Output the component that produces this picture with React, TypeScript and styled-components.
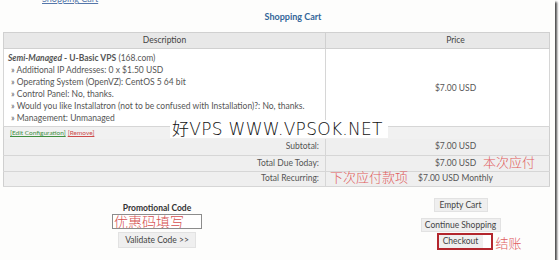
import styled, { createGlobalStyle } from 'styled-components';

const GlobalStyle = createGlobalStyle`
  html, body {
    margin: 0;
    padding: 0;
    background: #fff;
  }
  body {
    font-family: Lato, "Liberation Sans", sans-serif;
    font-size: 8.5px;
    color: #555;
  }
`;

const cjk = `"Noto Sans CJK SC", "Liberation Sans", sans-serif`;

const Frame = styled.div`
  position: relative;
  width: 555px;
  height: 260px;
  background: #fdfdfc;
  box-shadow: 2px 2px 2px rgba(0, 0, 0, 0.7);
  overflow: hidden;
`;

const Crumb = styled.a`
  display: block;
  width: fit-content;
  margin: -7px 0 0 42px;
  font-size: 9px;
  line-height: 11px;
  color: #5577aa;
  text-decoration: underline;
`;

const Title = styled.h1`
  margin: 7px 0 9px;
  padding-left: 31px;
  text-align: center;
  font-size: 9px;
  line-height: 12px;
  font-weight: bold;
  color: #336699;
`;

const Cart = styled.table`
  margin-left: 3px;
  width: 547px;
  border-collapse: collapse;
  table-layout: fixed;
  background: #fff;
  border: 1px solid #cfcfcf;
`;

const Head = styled.th<{ $price?: boolean }>`
  ${p => (p.$price ? '' : 'width: 321px;')}
  height: 15px;
  padding: 0 0 0 ${p => (p.$price ? 36 : 0)}px;
  line-height: 15px;
  background: #e8e8e8;
  border: 1px solid #d0d0d0;
  font-weight: normal;
  color: #444;
`;

const ItemCell = styled.td`
  padding: 3px 4px 2px;
  line-height: 12px;
  vertical-align: top;
  border: 1px solid #d6d6d6;
  white-space: nowrap;
`;

const PriceCell = styled.td`
  padding: 0 0 0 36px;
  text-align: center;
  vertical-align: middle;
  border: 1px solid #d6d6d6;
`;

const Option = styled.div`
  padding-left: 3px;
`;

const LinkRow = styled.tr`
  background: #f1f1f1;
`;

const LinkCell = styled.td`
  height: 12px;
  padding: 0 6px;
  line-height: 12px;
  border-top: 1px solid #d6d6d6;
  font-size: 6.5px;
`;

const SmallLink = styled.a<{ $red?: boolean }>`
  color: ${p => (p.$red ? '#cc4b4b' : '#3f8f3f')};
  text-decoration: underline;
  margin-right: 2px;
`;

const SumRow = styled.tr<{ $h: number }>`
  background: #efefef;
  height: ${p => p.$h}px;
`;

const SumLabel = styled.td`
  padding: 0 6px 0 0;
  text-align: right;
  line-height: 11px;
  border-bottom: 1px solid #d6d6d6;
  border-right: 1px solid #d6d6d6;
`;

const SumValue = styled.td`
  padding: 0 0 0 36px;
  text-align: center;
  line-height: 11px;
  border-bottom: 1px solid #d6d6d6;
`;

const Amount = styled.span`
  position: relative;
`;

const Note = styled.span<{ $side: 'left' | 'right' }>`
  position: absolute;
  top: -4px;
  ${p => (p.$side === 'right' ? 'left: 100%; margin-left: 7px;' : 'right: 100%; margin-right: 10px;')}
  font-family: ${cjk};
  font-size: 13px;
  font-weight: 300;
  line-height: 16px;
  color: #e05c5c;
  white-space: nowrap;
`;

const Footer = styled.div`
  display: grid;
  grid-template-columns: 314px 1fr;
`;

const Promo = styled.div`
  display: flex;
  flex-direction: column;
  align-items: center;
  padding-top: 16px;
`;

const PromoLabel = styled.div`
  font-weight: bold;
  color: #333;
  line-height: 11px;
`;

const PromoInput = styled.input`
  box-sizing: border-box;
  width: 90px;
  height: 15px;
  margin: 0;
  padding: 0 1px;
  border: 1px solid #8c8c8c;
  background: #fff;
  font-family: ${cjk};
  font-size: 14px;
  font-weight: 300;
  line-height: 13px;
  color: #d65050;
  outline: none;
`;

const Actions = styled.div`
  display: flex;
  flex-direction: column;
  align-items: center;
  padding: 11px 0 0 52px;
`;

const Button = styled.button<{ $w: number; $h?: number; $top?: number; $flat?: boolean }>`
  box-sizing: border-box;
  width: ${p => p.$w}px;
  height: ${p => p.$h ?? 14}px;
  margin: ${p => p.$top ?? 0}px 0 0;
  padding: 0;
  border: ${p => (p.$flat ? 'none' : '1px solid #e2e2e2')};
  background: #efefef;
  font-family: inherit;
  font-size: 8.5px;
  line-height: 12px;
  color: #444;
`;

const Marked = styled.div`
  position: relative;
  display: flex;
  margin: 1px 0 0 8px;
  padding: 0 8px 0 0;
  border: 2px solid #b3262d;
  background: #fff;
`;

const MarkNote = styled.span`
  position: absolute;
  left: 100%;
  top: 0;
  margin-left: 5px;
  font-family: ${cjk};
  font-size: 13px;
  font-weight: 300;
  line-height: 16px;
  color: #e05c5c;
  white-space: nowrap;
`;

const Watermark = styled.div`
  position: absolute;
  left: 170px;
  top: 120px;
  width: 218px;
  height: 18px;
  box-sizing: border-box;
  padding-left: 2px;
  background: #fff;
  font-family: "DejaVu Sans", ${cjk};
  font-size: 17px;
  font-weight: 200;
  line-height: 18px;
  letter-spacing: 0.3px;
  color: #111;
  white-space: nowrap;
`;

const options = [
  'Additional IP Addresses: 0 x $1.50 USD',
  'Operating System (OpenVZ): CentOS 5 64 bit',
  'Control Panel: No, thanks.',
  'Would you like Installatron (not to be confused with Installation)?: No, thanks.',
  'Management: Unmanaged',
];

export default function App() {
  return (
    <>
      <GlobalStyle />
      <Frame>
        <Crumb>Shopping Cart</Crumb>
        <Title>Shopping Cart</Title>
        <Cart>
          <thead>
            <tr>
              <Head>Description</Head>
              <Head $price>Price</Head>
            </tr>
          </thead>
          <tbody>
            <tr>
              <ItemCell>
                <strong>
                  <em>Semi-Managed</em> - U-Basic VPS
                </strong>{' '}
                (168.com)
                {options.map(o => (
                  <Option key={o}>» {o}</Option>
                ))}
              </ItemCell>
              <PriceCell>$7.00 USD</PriceCell>
            </tr>
            <LinkRow>
              <LinkCell colSpan={2}>
                <SmallLink>[Edit Configuration]</SmallLink>
                <SmallLink $red>[Remove]</SmallLink>
              </LinkCell>
            </LinkRow>
            <SumRow $h={16}>
              <SumLabel>Subtotal:</SumLabel>
              <SumValue>$7.00 USD</SumValue>
            </SumRow>
            <SumRow $h={16}>
              <SumLabel>Total Due Today:</SumLabel>
              <SumValue>
                <Amount>
                  $7.00 USD<Note $side="right">本次应付</Note>
                </Amount>
              </SumValue>
            </SumRow>
            <SumRow $h={15}>
              <SumLabel>Total Recurring:</SumLabel>
              <SumValue>
                <Amount>
                  <Note $side="left">下次应付款项</Note>$7.00 USD Monthly
                </Amount>
              </SumValue>
            </SumRow>
          </tbody>
        </Cart>
        <Footer>
          <Promo>
            <PromoLabel>Promotional Code</PromoLabel>
            <PromoInput readOnly defaultValue="优惠码填写" />
            <Button $w={78} $h={16} $top={3}>
              Validate Code &gt;&gt;
            </Button>
          </Promo>
          <Actions>
            <Button $w={54}>Empty Cart</Button>
            <Button $w={80} $top={6}>
              Continue Shopping
            </Button>
            <Marked>
              <Button $w={44} $h={13} $flat>
                Checkout
              </Button>
              <MarkNote>结账</MarkNote>
            </Marked>
          </Actions>
        </Footer>
        <Watermark>好VPS WWW.VPSOK.NET</Watermark>
      </Frame>
    </>
  );
}
